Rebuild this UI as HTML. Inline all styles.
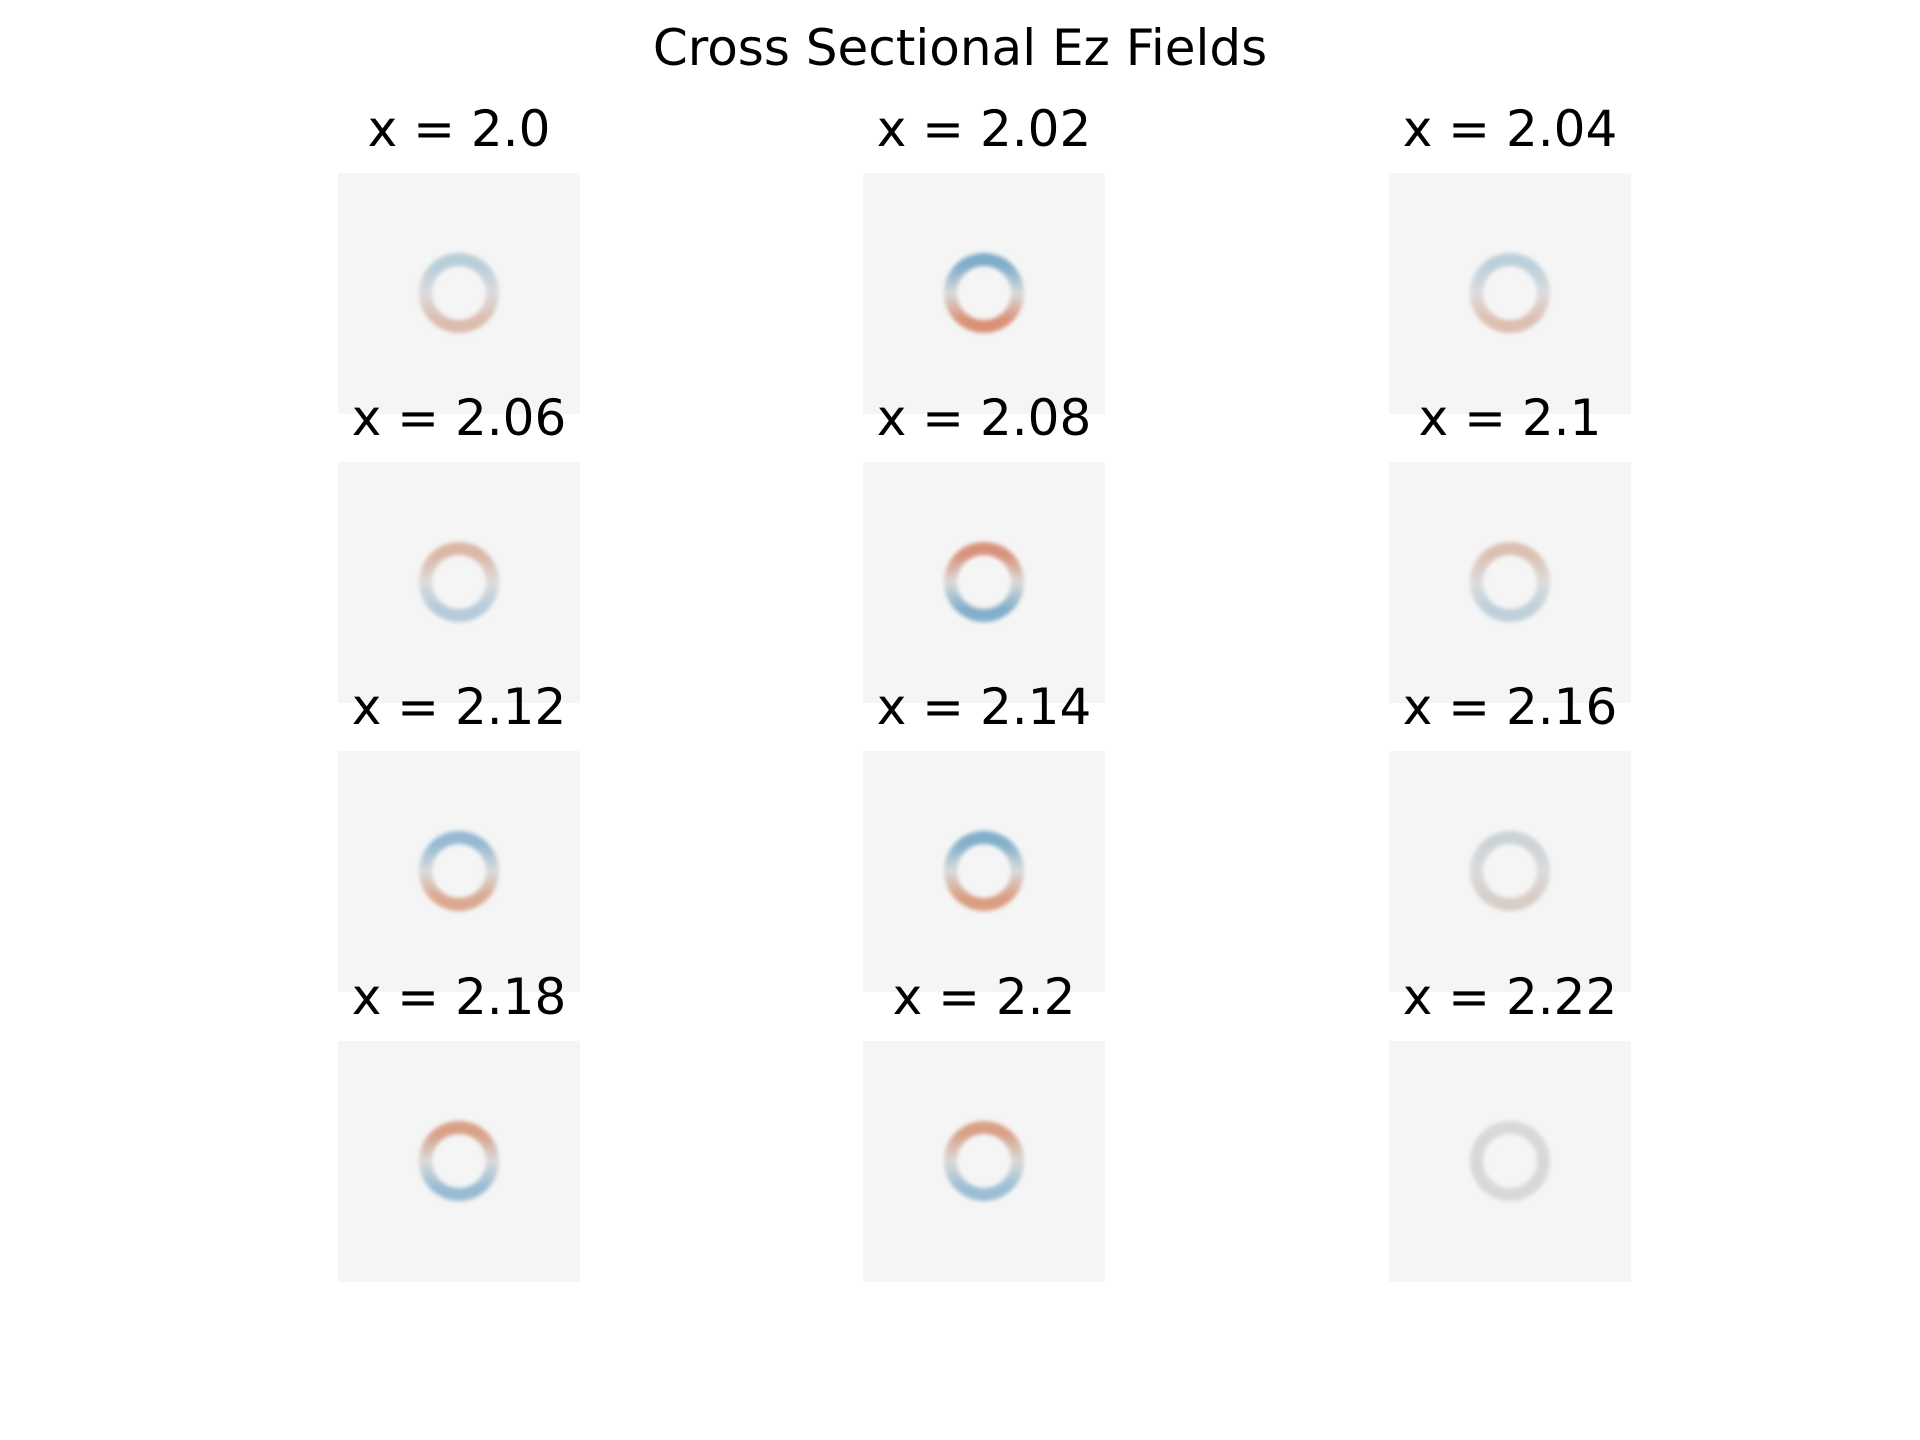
<!DOCTYPE html>
<html><head><meta charset="utf-8"><style>
body{margin:0;width:1920px;height:1440px;background:#fff;position:relative;overflow:hidden;font-family:"DejaVu Sans","Liberation Sans",sans-serif;}
.t{position:absolute;font-size:50px;color:#000;white-space:nowrap;transform:translateX(-50%);line-height:1;}
.p{position:absolute;width:242px;height:241px;background:#f5f5f5;}
.p svg{position:absolute;left:0;top:0;}
</style></head><body>
<div class="t" style="left:960px;top:23px;">Cross Sectional Ez Fields</div>

<svg width="0" height="0" style="position:absolute">
<defs>
<filter id="bl" x="-30%" y="-30%" width="160%" height="160%"><feGaussianBlur stdDeviation="2"/></filter>
</defs>
</svg>

<!-- row 1 -->
<div class="t" style="left:459px;top:104px;">x = 2.0</div>
<div class="t" style="left:984px;top:104px;">x = 2.02</div>
<div class="t" style="left:1510px;top:104px;">x = 2.04</div>
<div class="p" style="left:338px;top:173px;"><svg width="242" height="241"><defs><linearGradient id="g1" x1="0" y1="0" x2="0" y2="1"><stop offset="0.1" stop-color="#b9cdd9"/><stop offset="0.5" stop-color="#dcdcdc"/><stop offset="0.9" stop-color="#dcbcae"/></linearGradient></defs><circle cx="121" cy="120" r="33.5" fill="none" stroke="url(#g1)" stroke-width="13" filter="url(#bl)"/></svg></div>
<div class="p" style="left:863px;top:173px;"><svg width="242" height="241"><defs><linearGradient id="g2" x1="0" y1="0" x2="0" y2="1"><stop offset="0.1" stop-color="#7eadcb"/><stop offset="0.5" stop-color="#dadada"/><stop offset="0.9" stop-color="#d9927a"/></linearGradient></defs><circle cx="121" cy="120" r="33.5" fill="none" stroke="url(#g2)" stroke-width="13" filter="url(#bl)"/></svg></div>
<div class="p" style="left:1389px;top:173px;"><svg width="242" height="241"><defs><linearGradient id="g3" x1="0" y1="0" x2="0" y2="1"><stop offset="0.1" stop-color="#bccfdb"/><stop offset="0.5" stop-color="#dcdcdc"/><stop offset="0.9" stop-color="#ddbfb1"/></linearGradient></defs><circle cx="121" cy="120" r="33.5" fill="none" stroke="url(#g3)" stroke-width="13" filter="url(#bl)"/></svg></div>

<!-- row 2 -->
<div class="t" style="left:459px;top:393px;">x = 2.06</div>
<div class="t" style="left:984px;top:393px;">x = 2.08</div>
<div class="t" style="left:1510px;top:393px;">x = 2.1</div>
<div class="p" style="left:338px;top:462px;"><svg width="242" height="241"><defs><linearGradient id="g4" x1="0" y1="0" x2="0" y2="1"><stop offset="0.1" stop-color="#dbb7a6"/><stop offset="0.5" stop-color="#dcdcdc"/><stop offset="0.9" stop-color="#b5cbd9"/></linearGradient></defs><circle cx="121" cy="120" r="33.5" fill="none" stroke="url(#g4)" stroke-width="13" filter="url(#bl)"/></svg></div>
<div class="p" style="left:863px;top:462px;"><svg width="242" height="241"><defs><linearGradient id="g5" x1="0" y1="0" x2="0" y2="1"><stop offset="0.1" stop-color="#d9927a"/><stop offset="0.5" stop-color="#dadada"/><stop offset="0.9" stop-color="#82afcb"/></linearGradient></defs><circle cx="121" cy="120" r="33.5" fill="none" stroke="url(#g5)" stroke-width="13" filter="url(#bl)"/></svg></div>
<div class="p" style="left:1389px;top:462px;"><svg width="242" height="241"><defs><linearGradient id="g6" x1="0" y1="0" x2="0" y2="1"><stop offset="0.1" stop-color="#dcc0b2"/><stop offset="0.5" stop-color="#dcdcdc"/><stop offset="0.9" stop-color="#c0d0da"/></linearGradient></defs><circle cx="121" cy="120" r="33.5" fill="none" stroke="url(#g6)" stroke-width="13" filter="url(#bl)"/></svg></div>

<!-- row 3 -->
<div class="t" style="left:459px;top:682px;">x = 2.12</div>
<div class="t" style="left:984px;top:682px;">x = 2.14</div>
<div class="t" style="left:1510px;top:682px;">x = 2.16</div>
<div class="p" style="left:338px;top:751px;"><svg width="242" height="241"><defs><linearGradient id="g7" x1="0" y1="0" x2="0" y2="1"><stop offset="0.1" stop-color="#95bad2"/><stop offset="0.5" stop-color="#dadada"/><stop offset="0.9" stop-color="#daa890"/></linearGradient></defs><circle cx="121" cy="120" r="33.5" fill="none" stroke="url(#g7)" stroke-width="13" filter="url(#bl)"/></svg></div>
<div class="p" style="left:863px;top:751px;"><svg width="242" height="241"><defs><linearGradient id="g8" x1="0" y1="0" x2="0" y2="1"><stop offset="0.1" stop-color="#82afcb"/><stop offset="0.5" stop-color="#dadada"/><stop offset="0.9" stop-color="#d99d82"/></linearGradient></defs><circle cx="121" cy="120" r="33.5" fill="none" stroke="url(#g8)" stroke-width="13" filter="url(#bl)"/></svg></div>
<div class="p" style="left:1389px;top:751px;"><svg width="242" height="241"><defs><linearGradient id="g9" x1="0" y1="0" x2="0" y2="1"><stop offset="0.1" stop-color="#cbd3d8"/><stop offset="0.5" stop-color="#dadada"/><stop offset="0.9" stop-color="#d8cdc7"/></linearGradient></defs><circle cx="121" cy="120" r="33.5" fill="none" stroke="url(#g9)" stroke-width="13" filter="url(#bl)"/></svg></div>

<!-- row 4 -->
<div class="t" style="left:459px;top:972px;">x = 2.18</div>
<div class="t" style="left:984px;top:972px;">x = 2.2</div>
<div class="t" style="left:1510px;top:972px;">x = 2.22</div>
<div class="p" style="left:338px;top:1041px;"><svg width="242" height="241"><defs><linearGradient id="g10" x1="0" y1="0" x2="0" y2="1"><stop offset="0.1" stop-color="#d9a086"/><stop offset="0.5" stop-color="#dadada"/><stop offset="0.9" stop-color="#98bbd2"/></linearGradient></defs><circle cx="121" cy="120" r="33.5" fill="none" stroke="url(#g10)" stroke-width="13" filter="url(#bl)"/></svg></div>
<div class="p" style="left:863px;top:1041px;"><svg width="242" height="241"><defs><linearGradient id="g11" x1="0" y1="0" x2="0" y2="1"><stop offset="0.1" stop-color="#d9a086"/><stop offset="0.5" stop-color="#dadada"/><stop offset="0.9" stop-color="#9bbdd3"/></linearGradient></defs><circle cx="121" cy="120" r="33.5" fill="none" stroke="url(#g11)" stroke-width="13" filter="url(#bl)"/></svg></div>
<div class="p" style="left:1389px;top:1041px;"><svg width="242" height="241"><circle cx="121" cy="120" r="33.5" fill="none" stroke="#d8d8d8" stroke-width="13" filter="url(#bl)"/></svg></div>
</body></html>
